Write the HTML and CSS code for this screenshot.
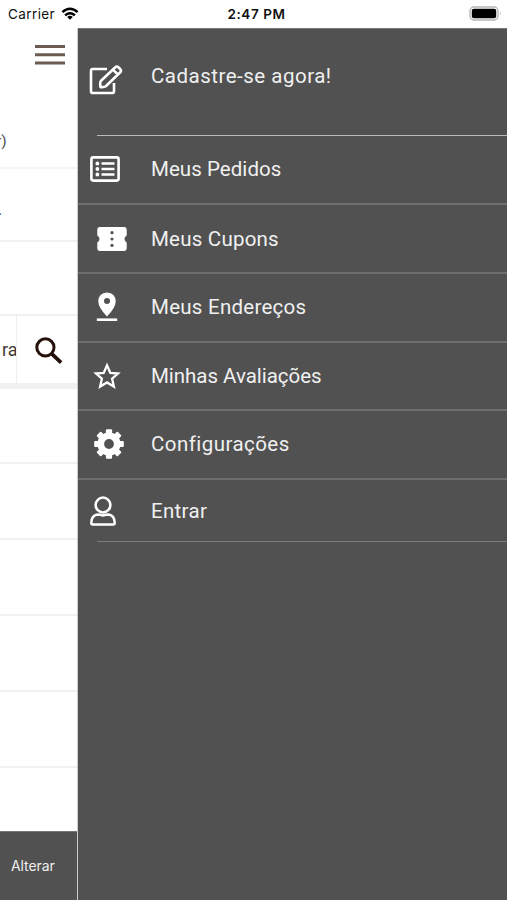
FILE: index.html
```html
<!DOCTYPE html>
<html lang="pt-BR">
<head>
<meta charset="utf-8">
<title>Menu</title>
<link rel="stylesheet" href="styles.css">
</head>
<body>
<header class="status">
  <div class="carrier"><span>Carrier</span>
    <svg width="18" height="14" viewBox="0 0 18 14" fill="none" stroke="#000" stroke-width="2.4"><path d="M1.4 5.2Q9-1.6 16.6 5.2M4.1 8.3Q9 4 13.9 8.3"/><path d="M9 12.8 6.2 10Q9 7.7 11.8 10Z" fill="#000" stroke="none"/></svg>
  </div>
  <div class="time">2:47 PM</div>
  <div class="power"><svg width="33" height="15" viewBox="0 0 33 15"><rect x="1" y="1" width="28" height="13" rx="4" fill="#fff" stroke="#b5b5b5" stroke-width="1.4"/><rect x="2.8" y="2.8" width="24.4" height="9.4" rx="2" fill="#000"/><path d="M31 5.3v4.4q1.5-2.2 0-4.4" fill="#999"/></svg></div>
</header>
<main class="screen">
  <section class="page">
    <div class="top">
      <svg class="burger" width="30" height="22" viewBox="0 0 30 22" stroke="#6b5b53" stroke-width="3"><path d="M0 2.5h30M0 10.8h30M0 19h30"/></svg>
      <span class="paren">r)</span>
    </div>
    <div class="row address"><span>.</span></div>
    <div class="row blank"></div>
    <div class="search">
      <div class="field">ra</div>
      <svg width="28" height="28" viewBox="0 0 28 28" fill="none" stroke="#24110c" stroke-width="3"><circle cx="10.4" cy="10.4" r="8.6"/><path d="m16.8 16.8 9.3 8.8" stroke-width="3.8"/></svg>
    </div>
    <div class="row r1"></div>
    <div class="row r2"></div>
    <div class="row r2"></div>
    <div class="row r2"></div>
    <div class="row r2"></div>
    <div class="rest"></div>
    <div class="change">Alterar</div>
  </section>
  <nav class="drawer">
    <a class="item signup">
      <svg width="34" height="30" viewBox="0 0 34 30" fill="none" stroke="#fff" stroke-width="2.6" stroke-linejoin="round"><path d="M18 4H3.8Q2 4 2 5.8V26.2Q2 28 3.8 28H23.2Q25 28 25 26.2V18"/><path d="M11.8 16 26.3 2.2Q28 .8 29.8 2.6L31.2 4Q32.8 5.8 31 7.5L16.8 21.3Q15.5 22.3 11.5 22.1 10.8 18 11.8 16ZM24.2 4.8 28.7 9.4"/></svg>
      <span>Cadastre-se agora!</span></a>
    <hr class="short bright">
    <a class="item orders">
      <svg width="30" height="26" viewBox="0 0 30 26" fill="none" stroke="#fff" stroke-width="2.6"><rect x="1.4" y="1.4" width="27.2" height="23.2" rx="2"/><path d="M11.5 7.5h13M11.5 13h13M11.5 18.5h13" stroke-width="2.3"/><g fill="#fff" stroke="none"><circle cx="7.4" cy="7.5" r="1.9"/><circle cx="7.4" cy="13" r="1.9"/><circle cx="7.4" cy="18.5" r="1.9"/></g></svg>
      <span>Meus Pedidos</span></a>
    <hr>
    <a class="item coupons">
      <svg width="30" height="24" viewBox="0 0 30 24"><path d="M3 0H27Q29.7 0 29.7 3V8.5Q27.5 9.5 27.5 12T29.7 15.5V21Q29.7 24 27 24H3Q.3 24 .3 21V15.5Q2.5 14.5 2.5 12T.3 8.5V3Q.3 0 3 0Z" fill="#fff"/><g fill="#515151"><circle cx="15" cy="5.7" r="1.6"/><circle cx="15" cy="12" r="1.6"/><circle cx="15" cy="18.3" r="1.6"/></g></svg>
      <span>Meus Cupons</span></a>
    <hr>
    <a class="item places">
      <svg width="22" height="30" viewBox="0 0 22 30" fill="#fff"><path fill-rule="evenodd" d="M11 .5Q19.5 1 19.7 9.3 19.7 15.7 11 24.5 2.3 15.7 2.3 9.3 2.5 1 11 .5ZM11 6A3 3 0 1 0 11 12 3 3 0 1 0 11 6Z"/><path d="M.8 26.4h20.4V29H.8z"/></svg>
      <span>Meus Endereços</span></a>
    <hr>
    <a class="item reviews">
      <svg width="28" height="28" viewBox="0 0 28 28" fill="none" stroke="#fff" stroke-width="2.3"><path d="M14 3.3 17.3 10.9 25 11.5 19.1 16.7 20.9 24.6 14 20.4 7.1 24.6 8.9 16.7 3 11.5 10.7 10.9Z"/></svg>
      <span>Minhas Avaliações</span></a>
    <hr>
    <a class="item settings">
      <svg width="30" height="30" viewBox="-15 -15 30 30"><g fill="#fff"><path fill-rule="evenodd" d="M0-11.6A11.6 11.6 0 1 0 0 11.6 11.6 11.6 0 1 0 0-11.6ZM0-4.9A4.9 4.9 0 1 1 0 4.9 4.9 4.9 0 1 1 0-4.9Z"/><g id="teeth"><rect x="-3.1" y="-14.8" width="6.2" height="6" rx="1"/><rect x="-3.1" y="8.8" width="6.2" height="6" rx="1"/><rect x="-14.8" y="-3.1" width="6" height="6.2" rx="1"/><rect x="8.8" y="-3.1" width="6" height="6.2" rx="1"/></g><use href="#teeth" transform="rotate(45)"/></g></svg>
      <span>Configurações</span></a>
    <hr>
    <a class="item login">
      <svg width="26" height="30" viewBox="0 0 26 30" fill="none" stroke="#fff" stroke-width="2.5" stroke-linejoin="round"><circle cx="13" cy="9" r="7.4"/><path d="M7.5 18.5Q10 18.5 13 19.5 16 18.5 18.5 18.5 24.7 19.5 24.7 27 24.7 28.5 23.2 28.5H2.8Q1.3 28.5 1.3 27 1.3 19.5 7.5 18.5Z"/></svg>
      <span>Entrar</span></a>
    <hr class="short">
  </nav>
</main>
</body>
</html>
```
FILE: styles.css
```css
* { box-sizing: border-box; }
body { margin: 0; width: 507px; height: 900px; overflow: hidden; background: #fff; font-family: Roboto, "Liberation Sans", sans-serif; }
svg { display: block; flex: none; }
.status { height: 28px; display: grid; grid-template-columns: 1fr 1fr 1fr; align-items: center; font-family: Inter, sans-serif; font-size: 13.5px; color: #111; }
.carrier { display: flex; align-items: center; gap: 6px; padding-left: 8px; letter-spacing: .4px; }
.carrier svg { margin-bottom: 1px; }
.time { text-align: center; font-weight: 600; letter-spacing: .6px; padding-left: 6px; }
.power { display: flex; justify-content: flex-end; padding-right: 5px; padding-bottom: 2px; }
.screen { height: 872px; display: grid; grid-template-columns: 78px 429px; }
.page { display: flex; flex-direction: column; border-right: 1px solid #ccc; overflow: hidden; color: #555; }
.top { height: 141px; flex: none; border-bottom: 2px solid #f5f5f5; padding-top: 16px; }
.burger { margin-left: 35px; }
.paren { display: block; margin: 66px 0 0 -4px; font-size: 15.5px; line-height: 18px; }
.row { flex: none; border-bottom: 2px solid #f1f1f1; }
.address { height: 73px; padding-top: 32px; line-height: 18px; }
.address span { margin-left: -2px; }
.blank { height: 74px; }
.search { height: 73px; flex: none; display: flex; align-items: center; gap: 18px; border-bottom: 6px solid #f1f1f1; }
.search svg { margin-top: 3px; }
.field { width: 17px; height: 67px; border-right: 1px solid #eee; overflow: hidden; line-height: 67px; font-size: 18px; padding-left: 2px; color: #443a37; }
.r1 { height: 75px; }
.r2 { height: 76px; }
.rest { flex: 1; }
.change { height: 69px; flex: none; background: #515151; border-top: 1px solid #777; color: #eee; font: 14px/68px Inter, sans-serif; padding-left: 11px; letter-spacing: -.1px; }
.drawer { background: #515151; border-top: 1px solid #777; color: #f0f0f0; }
.item { display: grid; grid-template-columns: 73px 1fr; align-items: center; height: 67px; font-size: 20.5px; line-height: 26px; white-space: nowrap; }
.item span { padding-bottom: 2px; }
.drawer hr { height: 2px; margin: 0; border: 0; background: #6e6e6e; }
.drawer .short { height: 1px; margin-left: 19px; background: #7c7c7c; }
.drawer .bright { background: #bbb; }
.signup { height: 106px; padding-bottom: 11px; }
.signup svg { margin: 6px 0 0 11px; }
.signup span { letter-spacing: .5px; }
.orders svg { margin: 0 0 2px 12px; }
.orders span { letter-spacing: .05px; }
.coupons svg { margin-left: 19px; }
.coupons span { padding-bottom: 0; letter-spacing: .22px; }
.places svg { margin: 0 0 1px 18px; }
.places span { letter-spacing: .25px; }
.reviews { height: 66px; }
.reviews svg { margin: 0 0 1px 15px; }
.reviews span { letter-spacing: -.03px; padding-bottom: 0; }
.settings { height: 67px; }
.settings svg { margin: 0 0 1px 16px; }
.settings span { letter-spacing: .45px; }
.login { height: 61px; }
.login svg { margin: 1px 0 0 12px; }
.login span { letter-spacing: .3px; padding-bottom: 0; }
```
